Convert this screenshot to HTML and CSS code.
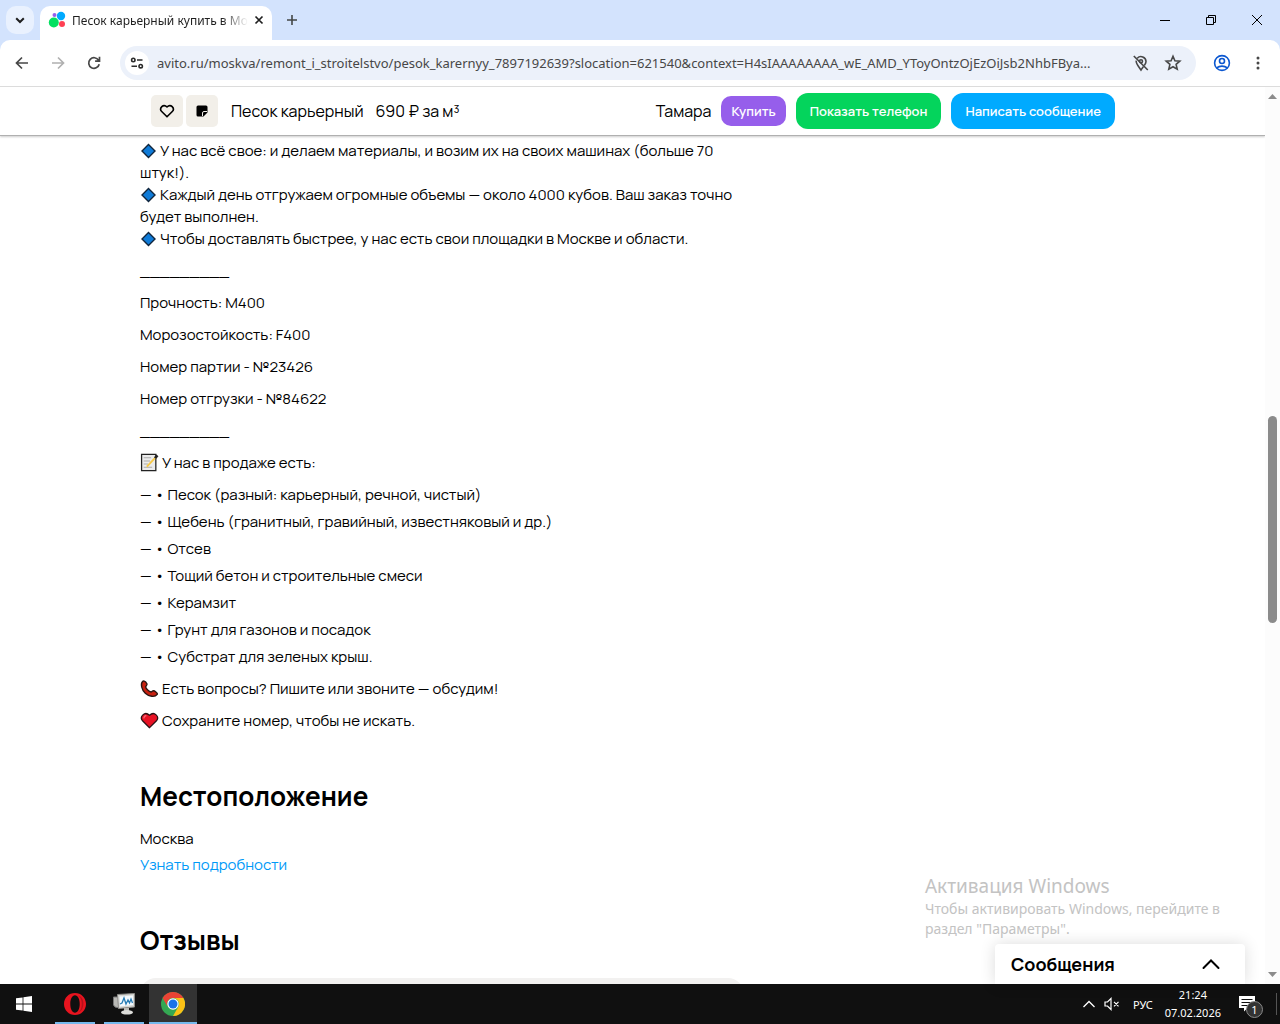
FILE: index.html
```html
<!DOCTYPE html>
<html lang="ru">
<head>
  <meta charset="UTF-8">
  <meta name="viewport" content="width=device-width, initial-scale=1.0">
  <title>Песок карьерный купить в Москве</title>
  <link rel="stylesheet" href="styles.css">
</head>
<body>

  <!-- TAB STRIP -->
  <div class="tabs">
    <button class="tab-search" aria-label="Поиск вкладок">
      <svg width="12" height="12" viewBox="0 0 12 12" fill="none" stroke="#1f1f1f" stroke-width="2"><path d="M2.200 4.200 6 8l3.800-3.800"/></svg>
    </button>
    <div class="tab">
      <svg width="18" height="18" viewBox="0 0 18 18"><circle cx="5.800" cy="11.500" r="5" fill="#04e061"/><circle cx="13" cy="5" r="4.200" fill="#00aaff"/><circle cx="14" cy="13" r="3" fill="#ff4053"/><circle cx="6.500" cy="4" r="2" fill="#965eeb"/></svg>
      <span class="tab-title">Песок карьерный купить в Мо</span>
      <button class="tab-close" aria-label="Закрыть вкладку">
        <svg width="10" height="10" viewBox="0 0 10 10" fill="none" stroke="#1f1f1f" stroke-width="1.700"><path d="m1.500 1.500 7 7m0-7-7 7"/></svg>
      </button>
    </div>
    <button class="tab-new" aria-label="Новая вкладка">
      <svg width="12" height="12" viewBox="0 0 12 12" stroke="#444746" stroke-width="1.600"><path d="M6 1v10M1 6h10"/></svg>
    </button>
    <div class="window-buttons">
      <button aria-label="Свернуть"><svg width="12" height="12" viewBox="0 0 12 12" stroke="#000"><path d="M1 6.500h10"/></svg></button>
      <button aria-label="Восстановить"><svg width="12" height="12" viewBox="0 0 12 12" fill="none" stroke="#000"><path d="M1.500 3.500h7v7h-7zM3.500 3.500v-2h7v7h-2"/></svg></button>
      <button aria-label="Закрыть"><svg width="12" height="12" viewBox="0 0 12 12" stroke="#000"><path d="m1 1 10 10M11 1 1 11"/></svg></button>
    </div>
  </div>

  <!-- TOOLBAR -->
  <div class="toolbar">
    <button aria-label="Назад"><svg width="16" height="16" viewBox="0 0 16 16" fill="none" stroke="#474747" stroke-width="1.700"><path d="M14 8H3M8 2.500 2.500 8 8 13.500"/></svg></button>
    <button aria-label="Вперёд"><svg width="16" height="16" viewBox="0 0 16 16" fill="none" stroke="#b0b0b0" stroke-width="1.700"><path d="M2 8h11M8 2.500 13.500 8 8 13.500"/></svg></button>
    <button aria-label="Обновить"><svg width="16" height="16" viewBox="0 0 16 16" fill="none" stroke="#474747" stroke-width="1.700"><path d="M13.200 9.200A5.300 5.300 0 1 1 12.600 5.300M13.500 1.800v4.400H9.100"/></svg></button>
    <div class="address">
      <button class="site-info" aria-label="Сведения о сайте">
        <svg width="14" height="14" viewBox="0 0 14 14" fill="none" stroke="#2b2b2b" stroke-width="1.600"><circle cx="3.300" cy="4" r="1.700"/><path d="M7 4h5.500M1.500 10.200H7"/><circle cx="10.700" cy="10.200" r="1.700"/></svg>
      </button>
      <input class="url" type="text" aria-label="Адресная строка" value="avito.ru/moskva/remont_i_stroitelstvo/pesok_karernyy_7897192639?slocation=621540&amp;context=H4sIAAAAAAAA_wE_AMD_YToyOntzOjEzOiJsb2NhbFBya...">
      <button aria-label="Геоданные"><svg width="18" height="18" viewBox="0 0 18 18" fill="none" stroke="#474747" stroke-width="1.600"><path d="M5.300 4.200A5 5 0 0 1 14 7.500c0 1.200-.7 2.500-1.600 3.900M4.200 6.600C3.700 9.500 7 13 9 16c.8-1.200 1.600-2.200 2.300-3.200M1.800 2l14 14"/><circle cx="9" cy="7.300" r="1.500"/></svg></button>
      <button aria-label="В закладки"><svg width="18" height="18" viewBox="0 0 18 18" fill="none" stroke="#474747" stroke-width="1.600"><path d="m9 2.300 1.900 4.500 4.900.4-3.700 3.200 1.100 4.800L9 12.700l-4.200 2.500 1.100-4.800-3.700-3.200 4.900-.4z"/></svg></button>
    </div>
    <button class="profile" aria-label="Профиль"><svg width="18" height="18" viewBox="0 0 18 18" fill="none" stroke="#0b57d0" stroke-width="1.600"><circle cx="9" cy="9" r="7.400"/><circle cx="9" cy="7" r="2.500"/><path d="M3.600 13.800c3-2.300 7.800-2.300 10.800 0"/></svg></button>
    <button aria-label="Меню"><svg width="16" height="16" viewBox="0 0 16 16" fill="#474747"><circle cx="8" cy="3" r="1.500"/><circle cx="8" cy="8" r="1.500"/><circle cx="8" cy="13" r="1.500"/></svg></button>
  </div>

  <!-- PAGE -->
  <div class="viewport">
    <div class="page">

      <header class="item-header">
        <div class="container item-bar">
          <button class="icon-btn" aria-label="В избранное"><svg width="16" height="16" viewBox="0 0 16 16" fill="none" stroke="#000" stroke-width="1.600" stroke-linejoin="round"><path d="M8 13.800 2.700 8.500C-.3 5.400 4.300.2 8 4c3.700-3.800 8.300 1.400 5.300 4.500z"/></svg></button>
          <button class="icon-btn" aria-label="Заметка"><svg width="14" height="14" viewBox="0 0 14 14"><path d="M3 1.500h8A1.500 1.500 0 0 1 12.500 3v5.500L8.500 12.500H3A1.500 1.500 0 0 1 1.500 11V3A1.500 1.500 0 0 1 3 1.500z"/><path d="M7.500 12V9A1.500 1.500 0 0 1 9 7.500h3" fill="none" stroke="#f2efe9"/></svg></button>
          <span class="item-name">Песок карьерный</span>
          <span class="item-price">690 ₽ за м³</span>
          <span class="seller">Тамара</span>
          <button class="btn btn-buy">Купить</button>
          <button class="btn btn-phone">Показать телефон</button>
          <button class="btn btn-message">Написать сообщение</button>
        </div>
      </header>

      <main class="container content">
        <p>
          <svg class="diamond" viewBox="0 0 16 16"><path d="M8 1.500 14.500 8 8 14.500 1.500 8z" fill="#0f7bd8" stroke="#10253c" stroke-width="1.400"/></svg> У нас всё свое: и делаем материалы, и возим их на своих машинах (больше 70<br>штук!).<br>
          <svg class="diamond" viewBox="0 0 16 16"><path d="M8 1.500 14.500 8 8 14.500 1.500 8z" fill="#0f7bd8" stroke="#10253c" stroke-width="1.400"/></svg> Каждый день отгружаем огромные объемы — около 4000 кубов. Ваш заказ точно<br>будет выполнен.<br>
          <svg class="diamond" viewBox="0 0 16 16"><path d="M8 1.500 14.500 8 8 14.500 1.500 8z" fill="#0f7bd8" stroke="#10253c" stroke-width="1.400"/></svg> Чтобы доставлять быстрее, у нас есть свои площадки в Москве и области.
        </p>
        <p>_________</p>
        <p>Прочность: М400</p>
        <p>Морозостойкость: F400</p>
        <p>Номер партии - №23426</p>
        <p>Номер отгрузки - №84622</p>
        <p>_________</p>
        <p><svg class="emoji" viewBox="0 0 18 18"><path d="M1.500 1.200h13.500v15.500H1.500z" fill="#ececec" stroke="#222" stroke-width="1.200"/><path d="M3.500 4.500h7M3.500 7.500h6M3.500 10.500h4M3.500 13.500h8" stroke="#aaa"/><path d="m6.500 13 8.500-9" stroke="#f7c948" stroke-width="1.800"/><path d="m14.200 4.800 2.300-2.500" stroke="#222" stroke-width="2.600"/></svg> У нас в продаже есть:</p>
        <ul>
          <li>Песок (разный: карьерный, речной, чистый)</li>
          <li>Щебень (гранитный, гравийный, известняковый и др.)</li>
          <li>Отсев</li>
          <li>Тощий бетон и строительные смеси</li>
          <li>Керамзит</li>
          <li>Грунт для газонов и посадок</li>
          <li>Субстрат для зеленых крыш.</li>
        </ul>
        <p><svg class="emoji" viewBox="0 0 18 18"><path d="M2.600 2.200C.2 4.500 1.500 10.200 5 13.400c3.600 3.300 9 4.200 11.300 1.200.8-1-2.800-4-4.100-3.300l-1.700 1C8.500 12 5.700 9.300 5.300 7.500l1.100-1.800C7.100 4.400 4.200.7 2.600 2.200z" fill="#c8200f" stroke="#2a1512" stroke-width="1.300"/></svg> Есть вопросы? Пишите или звоните — обсудим!</p>
        <p><svg class="emoji" viewBox="0 0 18 18"><path d="M9 15.800 2.400 9.200C-.8 5.500 4.300-.2 9 4c4.700-4.200 9.800 1.500 6.600 5.200z" fill="#e81224" stroke="#2b1114" stroke-width="1.200"/><path d="M3.800 7c-.2-1.500.8-2.700 2.200-2.500" fill="none" stroke="#f46b78" stroke-width="1.300"/></svg> Сохраните номер, чтобы не искать.</p>

        <h2>Местоположение</h2>
        <div class="city">Москва</div>
        <a class="details" href="#">Узнать подробности</a>

        <h2>Отзывы</h2>
        <div class="reviews"></div>
      </main>
    </div>

    <div class="scrollbar">
      <svg width="9" height="5" viewBox="0 0 9 5" fill="#8b8b8b"><path d="M0 5 4.500 0 9 5z"/></svg>
      <div class="thumb"></div>
      <svg width="9" height="5" viewBox="0 0 9 5" fill="#8b8b8b"><path d="M0 0h9L4.500 5z"/></svg>
    </div>

    <div class="activation">
      <div class="activation-title">Активация Windows</div>
      Чтобы активировать Windows, перейдите в<br>раздел "Параметры".
    </div>

    <button class="messenger">Сообщения
      <svg width="18" height="12" viewBox="0 0 18 12" fill="none" stroke="#000" stroke-width="2" stroke-linecap="round"><path d="m1.500 10 7.500-7.500 7.500 7.500"/></svg>
    </button>
  </div>

  <!-- TASKBAR -->
  <footer class="taskbar">
    <button class="start" aria-label="Пуск"><svg width="16" height="16" viewBox="0 0 16 16" fill="#fff"><path d="M0 2.300 6.600 1.400v6.200H0zM7.400 1.200 16 0v7.600H7.400zM0 8.400h6.600v6.200L0 13.700zM7.400 8.400H16V16l-8.600-1.200z"/></svg></button>
    <button class="app" aria-label="Opera"><svg width="24" height="24" viewBox="0 0 24 24"><path fill="#e8141f" fill-rule="evenodd" d="M12 1C5.800 1 1 5.900 1 12s4.800 11 11 11 11-4.900 11-11S18.200 1 12 1zm0 2.300c2.800 0 4.700 3.600 4.700 8.700s-1.900 8.700-4.700 8.700S7.300 17.100 7.300 12 9.200 3.300 12 3.300z"/><path fill="#b5101a" d="M15 3.500c5 2 5 15 0 17 7-1.500 7.500-15.500 0-17z"/></svg></button>
    <button class="app" aria-label="Монитор ресурсов"><svg width="24" height="24" viewBox="0 0 24 24"><path d="M1.500 5h6v11l-4.500-1-1.500-2z" fill="#b9b9b5" stroke="#777"/><path d="M5.500 2.500 22.500 1.500v13.500l-16 1.500z" fill="#d7d7d3" stroke="#8b8b88"/><path d="M7.500 4.500 21 3.500v9.500l-13 1.500z" fill="#f3f9fd"/><path d="m8 12 2-1 2-5 2 6 2-4 1.500 3 1.500-4 1.500 4" fill="none" stroke="#267cb5" stroke-width="1.300"/><path d="M12 16h5v3h-5z" fill="#b9b9b5"/><ellipse cx="15" cy="20.300" rx="6" ry="2.300" fill="#dededb"/></svg></button>
    <button class="app active" aria-label="Chrome"><svg width="24" height="24" viewBox="0 0 24 24"><circle cx="12" cy="12" r="12" fill="#34a853"/><path d="M1.600 6A12 12 0 0 1 22.400 6H12a6 6 0 0 0-5.200 9z" fill="#ea4335"/><path d="M22.400 6A12 12 0 0 1 12 24l5.200-9A6 6 0 0 0 12 6z" fill="#fbc116"/><circle cx="12" cy="12" r="5.700" fill="#fff"/><circle cx="12" cy="12" r="4.500" fill="#1a73e8"/></svg></button>
    <div class="tray">
      <svg width="12" height="8" viewBox="0 0 12 8" fill="none" stroke="#fff" stroke-width="1.300"><path d="M.5 7 6 1.500 11.500 7"/></svg>
      <svg width="16" height="14" viewBox="0 0 16 14" fill="none" stroke="#fff" stroke-width="1.200"><path d="M1 5v4h2.500L7 12.500v-11L3.500 5zM10 4.800l4.500 4.500M14.500 4.800 10 9.300"/></svg>
      <span class="lang">РУС</span>
      <div class="clock">21:24<br>07.02.2026</div>
      <div class="notices">
        <svg width="16" height="17" viewBox="0 0 16 17"><path d="M0 1h16v12H8.500L5 16.500V13H0z" fill="#fff"/><path d="M2.500 4.500h11M2.500 7.500h11M2.500 10.500h7" stroke="#101010"/></svg>
        <span class="count">1</span>
      </div>
    </div>
  </footer>

</body>
</html>
```

FILE: styles.css
```css
/* ===== GENERAL ===== */
* {
  box-sizing: border-box;
}
body {
  margin: 0;
  height: 100vh;
  display: flex;
  flex-direction: column;
  overflow: hidden;
  font-family: Manrope, Inter, sans-serif;
  color: #000;
  background: #fff;
}
button {
  font: inherit;
  border: none;
  background: none;
  padding: 0;
  cursor: pointer;
  display: flex;
  align-items: center;
  justify-content: center;
}

/* ===== TAB STRIP ===== */
.tabs {
  height: 52px;
  flex: none;
  margin-bottom: -12px;
  padding: 6px 0 12px 6px;
  display: flex;
  background: #d3e3fd;
  font-family: "Segoe UI", "Noto Sans", sans-serif;
}
.tab-search {
  width: 28px;
  height: 28px;
  border-radius: 10px;
  background: #e9f1fe;
}
.tab {
  width: 232px;
  margin-left: 6px;
  padding: 0 10px 6px 8px;
  display: flex;
  align-items: center;
  gap: 6px;
  border-radius: 10px 10px 0 0;
  background: #fff;
}
.tab svg {
  flex: none;
}
.tab-title {
  flex: 1;
  white-space: nowrap;
  font-size: 12px;
  color: #1f1f1f;
  mask-image: linear-gradient(to right, #000 85%, transparent);
}
.tab-close {
  width: 12px;
}
.tab-new {
  width: 28px;
  height: 28px;
  margin-left: 6px;
}
.window-buttons {
  display: flex;
  margin-left: auto;
  height: 28px;
}
.window-buttons button {
  width: 46px;
}

/* ===== TOOLBAR ===== */
.toolbar {
  height: 47px;
  flex: none;
  padding: 0 4px;
  display: flex;
  align-items: center;
  background: #fff;
  border-bottom: 1px solid #dcdcdc;
  border-radius: 10px 10px 0 0;
}
.toolbar > button {
  width: 36px;
  height: 36px;
}
.toolbar .profile {
  margin-left: 8px;
}
.address {
  flex: 1;
  height: 34px;
  margin-left: 8px;
  padding: 0 7px 0 5px;
  display: flex;
  align-items: center;
  border-radius: 17px;
  background: #ecf1fa;
}
.address button {
  width: 32px;
}
.address .site-info {
  width: 24px;
  height: 24px;
  border-radius: 50%;
  background: #fff;
}
.url {
  flex: 1;
  min-width: 0;
  margin: 0 8px;
  padding: 0;
  border: none;
  background: none;
  outline: none;
  font-family: "Segoe UI", "Noto Sans", sans-serif;
  font-size: 13px;
  color: #474747;
}

/* ===== PAGE ===== */
.viewport {
  flex: 1;
  min-height: 0;
  display: flex;
  position: relative;
}
.page {
  flex: 1;
  overflow: hidden;
}
.container {
  max-width: 985px;
  margin: 0 auto;
}
.item-header {
  border-bottom: 1px solid #b0b0b0;
  box-shadow: 0 1px 2px rgba(0, 0, 0, 0.2);
}
.item-bar {
  height: 48px;
  padding: 0 10px 0 11px;
  display: flex;
  align-items: center;
  font-size: 16px;
}
.icon-btn {
  width: 32px;
  height: 32px;
  margin-right: 3px;
  border-radius: 5px;
  background: #f2efe9;
}
.item-name {
  margin-left: 10px;
}
.item-price {
  margin-left: 12px;
}
.seller {
  margin-left: auto;
}
.btn {
  height: 36px;
  margin-left: 10px;
  padding: 0 14px;
  border-radius: 12px;
  color: #fff;
  font-size: 13px;
  font-weight: 600;
}
.btn-buy {
  height: 30px;
  padding: 0 10px;
  border-radius: 10px;
  background: #965eeb;
}
.btn-phone {
  background: #04d45c;
}
.btn-message {
  background: #00aaff;
}

/* ===== DESCRIPTION ===== */
.content {
  padding-top: 4px;
  font-size: 15px;
  line-height: 22px;
}
.content p {
  margin: 0 0 10px;
}
.diamond {
  width: 17px;
  height: 16px;
  vertical-align: -3px;
}
.emoji {
  width: 19px;
  height: 19px;
  vertical-align: -4px;
}
.content ul {
  margin: 0 0 10px;
  padding: 0;
  list-style: none;
}
.content li + li {
  margin-top: 5px;
}
.content li::before {
  content: "— • ";
}
.content h2 {
  margin: 48px 0 16px;
  font-size: 26px;
  line-height: 32px;
}
.city {
  margin-bottom: 4px;
}
.details {
  display: block;
  color: #0099f7;
  text-decoration: none;
}
.reviews {
  width: 604px;
  height: 120px;
  margin-top: 22px;
  border-radius: 16px;
  background: #f2f1f0;
}

/* ===== SCROLLBAR ===== */
.scrollbar {
  width: 15px;
  padding: 7px 0;
  display: flex;
  flex-direction: column;
  align-items: center;
  justify-content: space-between;
  background: #fcfcfc;
}
.thumb {
  width: 9px;
  height: 207px;
  margin-bottom: 32px;
  border-radius: 5px;
  background: #8b8b8b;
}

/* ===== OVERLAYS ===== */
.activation {
  position: absolute;
  right: 40px;
  bottom: 45px;
  width: 315px;
  font-family: "Segoe UI", "Noto Sans", sans-serif;
  font-size: 14px;
  line-height: 20px;
  color: #c3c3c3;
}
.activation-title {
  font-size: 19px;
  line-height: 26px;
}
.messenger {
  position: absolute;
  right: 35px;
  bottom: 0;
  width: 250px;
  height: 40px;
  padding: 0 25px 0 16px;
  justify-content: space-between;
  border-radius: 4px 4px 0 0;
  background: #fff;
  box-shadow: 0 0 16px rgba(0, 0, 0, 0.14);
  font-size: 18px;
  font-weight: 700;
}

/* ===== TASKBAR ===== */
.taskbar {
  height: 40px;
  flex: none;
  display: flex;
  gap: 9px;
  background: #101010;
  color: #fff;
  font-family: "Segoe UI", "Noto Sans", sans-serif;
  font-size: 11px;
}
.start {
  width: 46px;
  padding-left: 2px;
}
.app {
  width: 40px;
  padding-top: 2px;
  border-bottom: 2px solid #76b9ed;
}
.app.active {
  width: 48px;
  margin-left: -4px;
  background: #333;
}
.tray {
  margin-left: auto;
  display: flex;
  align-items: center;
}
.tray svg {
  margin-right: 9px;
}
.lang {
  margin: 0 12px 0 4px;
}
.clock {
  text-align: center;
  line-height: 18px;
}
.notices {
  position: relative;
  width: 38px;
  margin-left: 18px;
  margin-right: 3px;
  padding-top: 2px;
  border-right: 1px solid #555;
}
.count {
  position: absolute;
  left: 7px;
  top: 8px;
  width: 17px;
  height: 17px;
  border: 1px solid #8a8a8a;
  border-radius: 50%;
  background: #333;
  line-height: 15px;
  text-align: center;
}
```
